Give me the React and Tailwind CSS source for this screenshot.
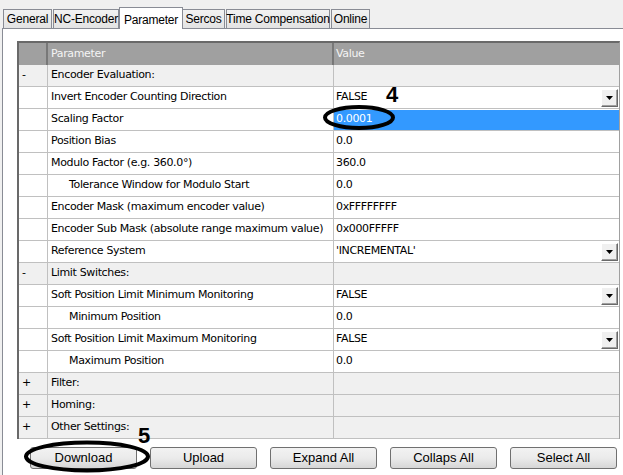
const rows = [
  { g: "-", p: "Encoder Evaluation:" },
  { p: "Invert Encoder Counting Direction", v: "FALSE", dd: true },
  { p: "Scaling Factor", v: "0.0001", sel: true },
  { p: "Position Bias", v: "0.0" },
  { p: "Modulo Factor (e.g. 360.0°)", v: "360.0" },
  { p: "Tolerance Window for Modulo Start", v: "0.0", indent: true },
  { p: "Encoder Mask (maximum encoder value)", v: "0xFFFFFFFF" },
  { p: "Encoder Sub Mask (absolute range maximum value)", v: "0x000FFFFF" },
  { p: "Reference System", v: "'INCREMENTAL'", dd: true },
  { g: "-", p: "Limit Switches:" },
  { p: "Soft Position Limit Minimum Monitoring", v: "FALSE", dd: true },
  { p: "Minimum Position", v: "0.0", indent: true },
  { p: "Soft Position Limit Maximum Monitoring", v: "FALSE", dd: true },
  { p: "Maximum Position", v: "0.0", indent: true },
  { g: "+", p: "Filter:" },
  { g: "+", p: "Homing:" },
  { g: "+", p: "Other Settings:" },
];

const tabs = [
  { name: "General", w: "w-[49px]" },
  { name: "NC-Encoder", w: "w-[66px]" },
  { name: "Parameter", w: "w-[64px]", active: true },
  { name: "Sercos", w: "w-[43px]" },
  { name: "Time Compensation", w: "w-[104px]" },
  { name: "Online", w: "w-[39px]" },
];

const buttons = ["Download", "Upload", "Expand All", "Collaps All", "Select All"];

function DropButton() {
  return (
    <div className="mr-[1px] flex h-[18px] w-[17px] items-center justify-center border border-t-white border-l-white border-r-[#696969] border-b-[#696969] bg-[#f0f0f0] shadow-[inset_-1px_-1px_0_#a0a0a0]">
      <svg width="7" height="4" viewBox="0 0 7 4">
        <path d="M0 0h7L3.5 4z" fill="#000" />
      </svg>
    </div>
  );
}

function Row({ r }) {
  const group = !!r.g;
  return (
    <div className={`flex h-[22px] border-b border-[#c0c0c0] ${group ? "bg-[#f0f0f0]" : "bg-white"}`}>
      <div className="flex w-[29px] items-center border-r border-[#c0c0c0] pl-[3px]">{r.g}</div>
      <div className={`flex w-[286px] items-center whitespace-nowrap border-r border-[#c0c0c0] ${r.indent ? "pl-[21px]" : "pl-[3px]"}`}>
        {r.p}
      </div>
      <div className="flex flex-1 items-center">
        {r.sel ? (
          <div className="flex h-[20px] flex-1 items-center bg-[#3399ff] pl-[2px] text-white">{r.v}</div>
        ) : (
          <>
            <div className="flex-1 pl-[2px]">{r.v}</div>
            {r.dd && <DropButton />}
          </>
        )}
      </div>
    </div>
  );
}

export default function App() {
  return (
    <div className="relative h-[475px] w-[623px] overflow-hidden bg-[#f0f0f0] text-[11px] text-black [font-family:'DejaVu_Sans',sans-serif] tracking-[-0.35px]">
      {/* Tabs */}
      <div className="flex h-[28px] items-end pl-[3px] pt-[6px] text-[12px] tracking-[-0.2px] [font-family:'Liberation_Sans',Arial,sans-serif]">
        {tabs.map((t) =>
          t.active ? (
            <div
              key={t.name}
              className={`relative z-10 -mx-[1px] -mb-[1px] flex h-[22px] ${t.w} items-start justify-center whitespace-nowrap border border-b-0 border-[#898c95] bg-white pt-[3px]`}
            >
              {t.name}
            </div>
          ) : (
            <div
              key={t.name}
              className={`mr-[1px] flex h-[19px] ${t.w} items-center justify-center whitespace-nowrap border border-b-0 border-[#898c95] bg-gradient-to-b from-[#f2f2f2] to-[#e3e3e3]`}
            >
              {t.name}
            </div>
          )
        )}
      </div>

      {/* Panel */}
      <div className="ml-[2px] flex h-[447px] flex-col border-l border-t border-[#898c95] bg-white pl-[14px] pt-[12px]">
        <div className="w-[603px] border-l-2 border-t-2 border-r border-[#696969] border-r-[#a0a0a0]">
          <div className="flex h-[22px] bg-[#a0a0a0] text-[#f4f4f4]">
            <div className="w-[29px] border-r-2 border-[#787878]" />
            <div className="flex w-[286px] items-center border-r-2 border-[#787878] pl-[3px]">Parameter</div>
            <div className="flex flex-1 items-center pl-[2px]">Value</div>
          </div>
          {rows.map((r, i) => (
            <Row key={i} r={r} />
          ))}
        </div>

        {/* Buttons */}
        <div className="mt-[8px] flex gap-[13px] pl-[13px] [font-family:'Liberation_Sans',Arial,sans-serif] text-[13px] tracking-normal">
          {buttons.map((b) => (
            <button
              key={b}
              className="h-[22px] w-[107px] rounded-[3px] border border-[#707070] bg-gradient-to-b from-[#f2f2f2] via-[#ebebeb] to-[#d6d6d6] text-black"
            >
              {b}
            </button>
          ))}
        </div>
      </div>

      {/* Annotations */}
      <div className="absolute left-[386px] top-[84px] text-[22px] font-bold leading-none tracking-normal [font-family:'Liberation_Sans',Arial,sans-serif]">
        4
      </div>
      <svg className="absolute left-[322px] top-[104px]" width="74" height="27" viewBox="0 0 74 27">
        <ellipse cx="37" cy="13.5" rx="34" ry="10.5" fill="none" stroke="#000" strokeWidth="4" />
      </svg>
      <div className="absolute left-[138px] top-[425px] text-[22px] font-bold leading-none tracking-normal [font-family:'Liberation_Sans',Arial,sans-serif]">
        5
      </div>
      <svg className="absolute left-[23px] top-[439px]" width="128" height="35" viewBox="0 0 128 35">
        <ellipse cx="64" cy="17.5" rx="61" ry="14" fill="none" stroke="#000" strokeWidth="4" />
      </svg>
    </div>
  );
}
